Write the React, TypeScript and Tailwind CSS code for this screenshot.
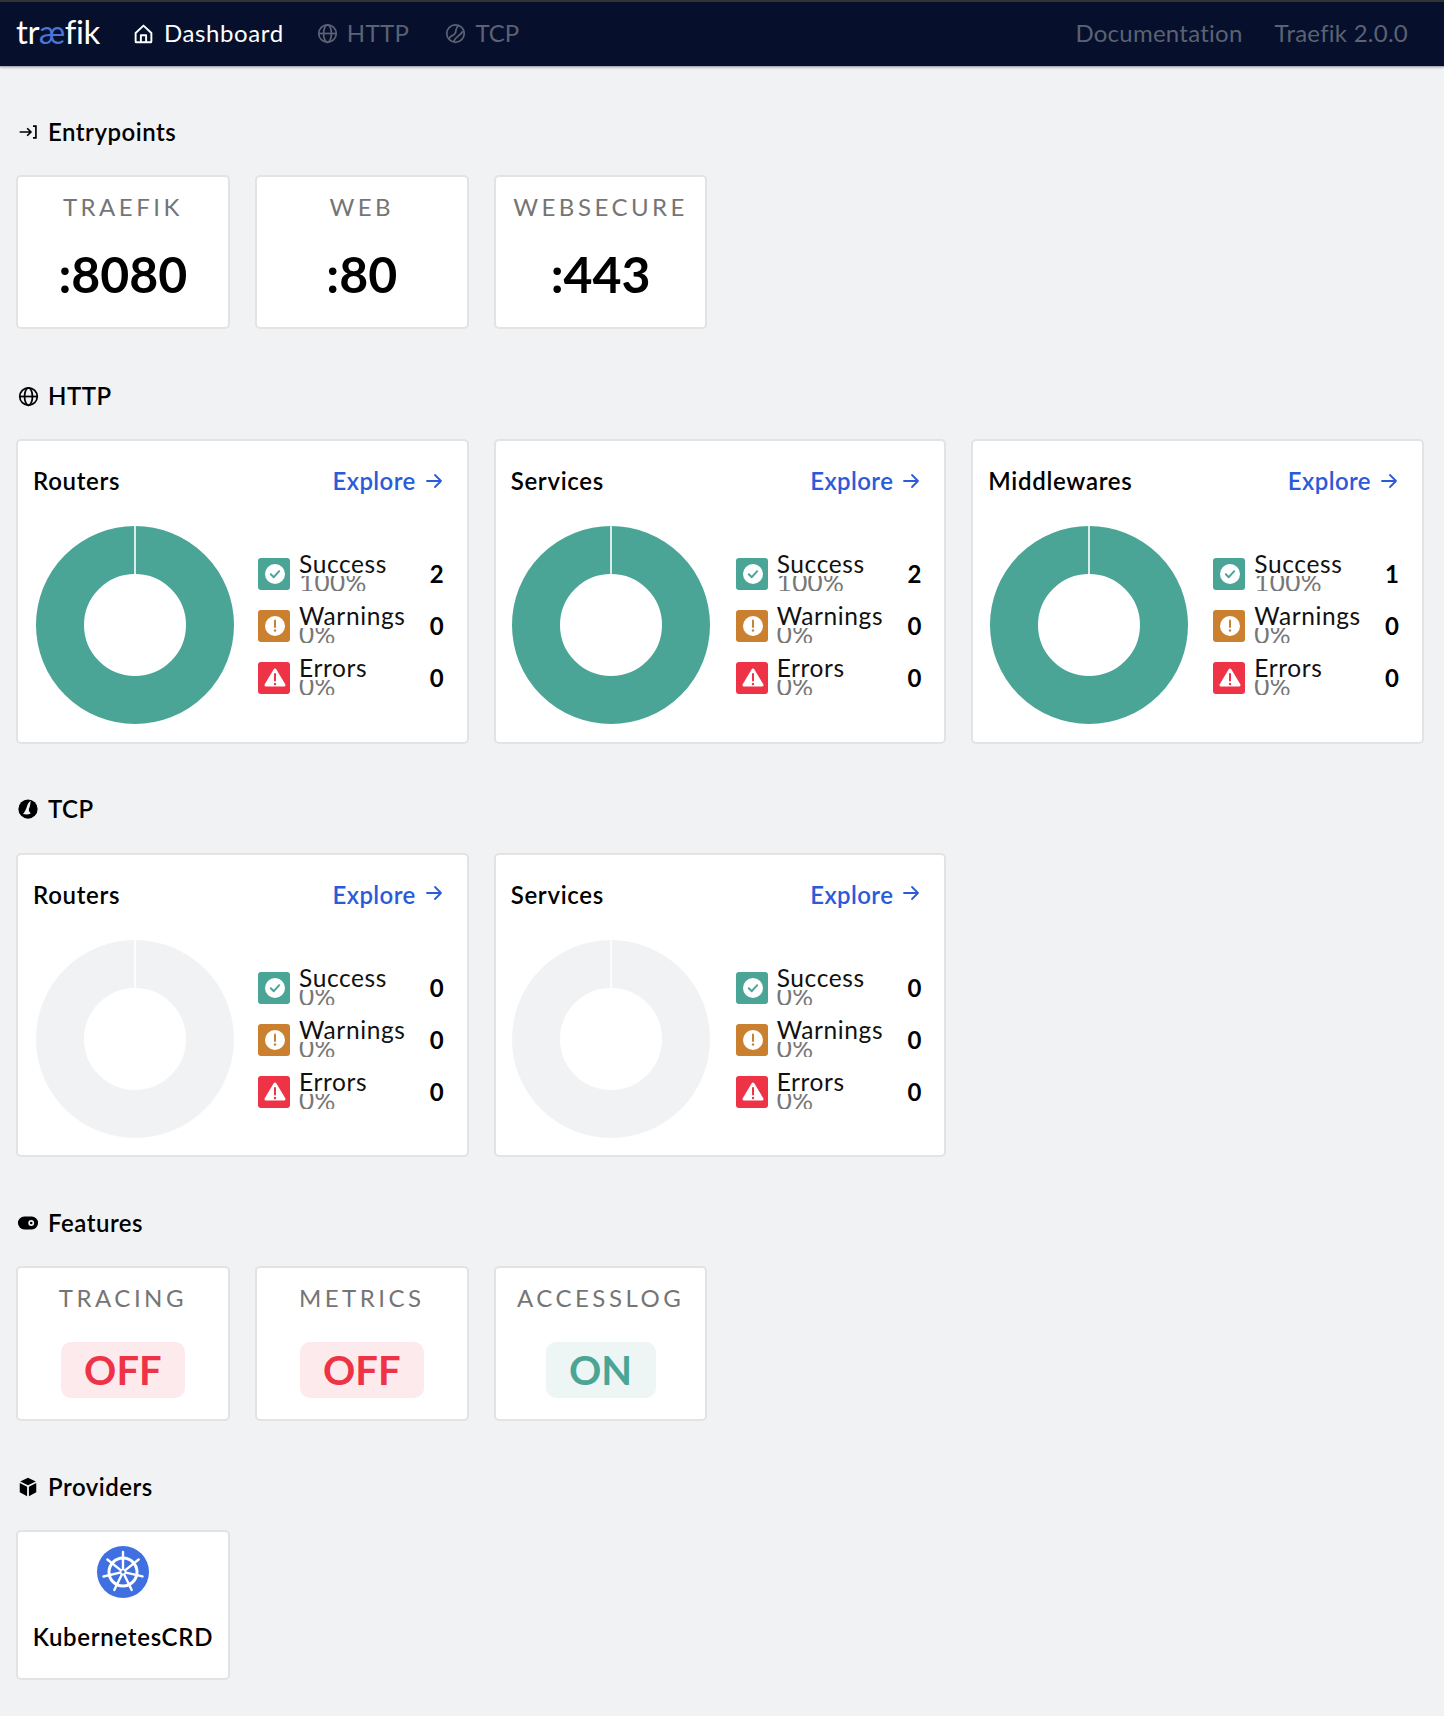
import React from "react";

const Globe = ({ className = "" }: { className?: string }) => (
  <svg viewBox="0 0 24 24" fill="none" stroke="currentColor" strokeWidth="2" className={className}>
    <circle cx="12" cy="12" r="10" />
    <ellipse cx="12" cy="12" rx="4.5" ry="10" />
    <path d="M2 12h20" />
  </svg>
);

const TcpOutline = ({ className = "" }: { className?: string }) => (
  <svg viewBox="0 0 24 24" fill="none" stroke="currentColor" strokeWidth="2" strokeLinecap="round" className={className}>
    <circle cx="12" cy="12" r="10" />
    <path d="M15.5 3C11 6 13.5 9 11.5 12S6 14 5 17.5" />
    <path d="M10 21c1-3 3-4.500 5-6s4-3 5-5" />
  </svg>
);

const TcpSolid = ({ className = "" }: { className?: string }) => (
  <svg viewBox="0 0 24 24" className={className}>
    <circle cx="12" cy="12" r="10.5" fill="currentColor" />
    <path d="M15 3C14.5 7 14 10 13 12C12.500 14 14 15.500 15 17C12 18.500 9 18 6.500 17.500C8.500 15 9.500 13 10.500 10C11.500 7 12.500 4.500 15 3Z" fill="#f1f2f4" />
  </svg>
);

const Home = ({ className = "" }: { className?: string }) => (
  <svg viewBox="0 0 24 24" fill="none" stroke="currentColor" strokeWidth="2.2" strokeLinejoin="round" className={className}>
    <path d="M3 11.5 12 3l9 8.5V21a1 1 0 0 1-1 1H4a1 1 0 0 1-1-1z" />
    <path d="M9 22v-8h6v8" />
  </svg>
);

const Enter = ({ className = "" }: { className?: string }) => (
  <svg viewBox="0 0 24 24" fill="none" stroke="currentColor" strokeWidth="2" className={className}>
    <path d="M2 12h13M11 7.5l4.5 4.5-4.5 4.5M18 5h3.500v14H18" />
  </svg>
);

const Toggle = ({ className = "" }: { className?: string }) => (
  <svg viewBox="0 0 24 24" className={className}>
    <rect x="1" y="5" width="22" height="14" rx="7" fill="currentColor" />
    <circle cx="15.500" cy="12" r="3.200" fill="#f1f2f4" />
    <circle cx="15.500" cy="12" r="1.400" fill="currentColor" />
  </svg>
);

const Cube = ({ className = "" }: { className?: string }) => (
  <svg viewBox="0 0 24 24" fill="currentColor" className={className}>
    <path d="M12 2 3.500 6 12 10l8.500-4z" />
    <path d="M3 7.600v10L11 22V11.600z" />
    <path d="M21 7.600v10L13 22V11.600z" />
  </svg>
);

const Arrow = ({ className = "" }: { className?: string }) => (
  <svg viewBox="0 0 18 18" fill="none" stroke="currentColor" strokeWidth="1.800" strokeLinecap="round" strokeLinejoin="round" className={className}>
    <path d="M2 9h14M10 3l6 6-6 6" />
  </svg>
);

const Wheel = () => (
  <svg viewBox="0 0 52 52" className="h-[52px] w-[52px]">
    <circle cx="26" cy="26" r="26" fill="#3f6fe0" />
    <g stroke="#fff" fill="none" strokeLinecap="round">
      <circle cx="26" cy="26" r="14" strokeWidth="3" />
      {[0, 51.4, 102.8, 154.3, 205.7, 257.1, 308.6].map((a) => (
        <g key={a} transform={`rotate(${a} 26 26)`}>
          <path d="M26 23V6" strokeWidth="2.400" />
        </g>
      ))}
      <circle cx="26" cy="26" r="2.500" strokeWidth="1.600" />
    </g>
  </svg>
);

const Donut = ({ color }: { color: string }) => (
  <svg viewBox="0 0 198 198" className="h-[198px] w-[198px] shrink-0">
    <circle cx="99" cy="99" r="75" fill="none" stroke={color} strokeWidth="48" />
    <path d="M99 0v48" stroke="#fff" strokeWidth="1.600" />
  </svg>
);

const Swatch = ({ kind }: { kind: "ok" | "warn" | "err" }) => {
  if (kind === "ok")
    return (
      <svg viewBox="0 0 32 32" className="h-8 w-8 shrink-0">
        <rect width="32" height="32" rx="3" fill="#4aa596" />
        <circle cx="17" cy="16" r="10" fill="#fff" />
        <path d="M12.800 16.200l3 3 5.400-6" fill="none" stroke="#4aa596" strokeWidth="2" strokeLinecap="round" strokeLinejoin="round" />
      </svg>
    );
  if (kind === "warn")
    return (
      <svg viewBox="0 0 32 32" className="h-8 w-8 shrink-0">
        <rect width="32" height="32" rx="3" fill="#cb8030" />
        <circle cx="17" cy="16" r="10" fill="#fff" />
        <path d="M17 10.500v6.500" stroke="#cb8030" strokeWidth="2" strokeLinecap="round" />
        <circle cx="17" cy="20.500" r="1.200" fill="#cb8030" />
      </svg>
    );
  return (
    <svg viewBox="0 0 32 32" className="h-8 w-8 shrink-0">
      <rect width="32" height="32" rx="3" fill="#ee3346" />
      <path d="M17 8 L26 23 H8 Z" fill="#fff" stroke="#fff" strokeWidth="3" strokeLinejoin="round" />
      <path d="M17 12v6.500" stroke="#ee3346" strokeWidth="2" strokeLinecap="round" />
      <circle cx="17" cy="22" r="1.200" fill="#ee3346" />
    </svg>
  );
};

const LegendRow = ({ kind, label, pct, n }: { kind: "ok" | "warn" | "err"; label: string; pct: string; n: number }) => (
  <div className="flex h-8 items-start">
    <Swatch kind={kind} />
    <div className="ml-[9px] flex-1">
      <div className="relative z-10 h-[18px] text-[24.5px] leading-[12px] tracking-[0.6px] text-[#111]">{label}</div>
      <div className="h-[15px] overflow-hidden text-[26px] leading-[13px] tracking-[0.4px] text-[#777]">{pct}</div>
    </div>
    <div className="self-center text-[24px] font-bold text-black">{n}</div>
  </div>
);

const StatCard = ({ title, ok, okPct, warn, err, empty, lift, pos = 0 }: { title: string; ok: number; okPct: string; warn: number; err: number; empty?: boolean; lift?: boolean; pos?: number }) => (
  <div className={`col-span-2 rounded-[5px] border-2 border-[#e3e3e3] bg-white pt-[26px] ${lift ? "pb-[17px]" : "pb-[18px]"}`}>
    <div className="flex h-[28px] items-center justify-between pl-[15px] pr-[24px]">
      <span className="text-[24px] font-semibold tracking-[0.7px] text-black">{title}</span>
      <span className="flex items-center text-[24px] font-semibold tracking-[0.4px] text-[#2c5bd9]">
        Explore
        <Arrow className={`ml-[9px] h-[18px] w-[18px] ${lift ? "-translate-y-[2px]" : ""}`} />
      </span>
    </div>
    <div className={`mt-[31px] flex items-center pr-[23px] ${pos === 1 ? "pl-[16px]" : pos === 2 ? "pl-[17px]" : "pl-[18px]"}`}>
      <Donut color={empty ? "#f1f2f4" : "#4aa596"} />
      <div className={`mt-[2px] flex flex-1 flex-col gap-5 ${pos === 1 ? "ml-[26px]" : pos === 2 ? "ml-[25px]" : "ml-[24px]"}`}>
        <LegendRow kind="ok" label="Success" pct={okPct} n={ok} />
        <LegendRow kind="warn" label="Warnings" pct="0%" n={warn} />
        <LegendRow kind="err" label="Errors" pct="0%" n={err} />
      </div>
    </div>
  </div>
);

const Heading = ({ icon, children, tall }: { icon: React.ReactNode; children: React.ReactNode; tall?: boolean }) => (
  <div className={`flex h-[28px] items-center text-black ${tall ? "mb-[30px]" : "mb-[29px]"}`}>
    <span className="ml-[1px] flex h-[22px] w-[22px] items-center justify-center">{icon}</span>
    <span className="ml-[9px] text-[24px] font-semibold tracking-[0.5px]">{children}</span>
  </div>
);

const SmallCard = ({ h, children }: { h: string; children: React.ReactNode }) => (
  <div className={`flex ${h} flex-col items-center rounded-[5px] border-2 border-[#e3e3e3] bg-white pt-[16px]`}>{children}</div>
);

const Label = ({ children }: { children: React.ReactNode }) => (
  <div className="h-[28px] text-[24px] leading-[28px] tracking-[3.5px] text-[#757575]">{children}</div>
);

const Entry = ({ name, port }: { name: string; port: string }) => (
  <SmallCard h="h-[154px]">
    <Label>{name}</Label>
    <div className="mt-[27px] h-[52px] text-[50px] font-bold leading-[52px] text-black">{port}</div>
  </SmallCard>
);

const Feature = ({ name, on }: { name: string; on?: boolean }) => (
  <SmallCard h="h-[155px]">
    <Label>{name}</Label>
    <div
      className={`mt-[30px] flex h-[56px] items-center justify-center rounded-[10px] text-[40px] font-bold ${
        on ? "w-[110px] bg-[#edf6f5] text-[#4aa596]" : "w-[124px] bg-[#fdeaec] text-[#ee3346]"
      }`}
    >
      {on ? "ON" : "OFF"}
    </div>
  </SmallCard>
);

export default function App() {
  return (
    <div className="min-h-[1716px] bg-[#f1f2f4] font-['Lato',sans-serif]">
      <header className="flex h-[67px] items-center justify-between border-t-2 border-b border-t-[#333333] border-b-[#a9abb0] bg-[#060f2b] pb-[2px] pl-4 pr-[36px] text-[24px] shadow-[0_1px_2px_rgba(0,0,0,0.2)]">
        <div className="flex items-center">
          <div className="mb-[4px] w-[117px] text-[33px] font-normal leading-none tracking-[-0.4px] text-white [font-variant-ligatures:none]">
            tr<span className="text-[#4a74d8]">æ</span>fik
          </div>
          <div className="flex items-center text-white">
            <Home className="h-[21px] w-[21px]" />
            <span className="ml-[10px] tracking-[0.6px]">Dashboard</span>
          </div>
          <div className="ml-[33px] flex items-center text-[#5b6273]">
            <Globe className="h-[21px] w-[21px]" />
            <span className="ml-[9px] tracking-[0.4px]">HTTP</span>
          </div>
          <div className="ml-[36px] flex items-center text-[#5b6273]">
            <TcpOutline className="h-[21px] w-[21px]" />
            <span className="ml-[9px]">TCP</span>
          </div>
        </div>
        <div className="flex items-center gap-[32px] tracking-[0.25px] text-[#5b6273]">
          <span>Documentation</span>
          <span>Traefik 2.0.0</span>
        </div>
      </header>
      <main className="pl-4 pr-5 pt-[51px]">
        <section>
          <Heading icon={<Enter className="h-[20px] w-[20px]" />}>Entrypoints</Heading>
          <div className="grid grid-cols-6 gap-x-[25px]">
            <Entry name="TRAEFIK" port=":8080" />
            <Entry name="WEB" port=":80" />
            <Entry name="WEBSECURE" port=":443" />
          </div>
        </section>
        <section className="mt-[53px]">
          <Heading icon={<Globe className="h-[21px] w-[21px]" />}>HTTP</Heading>
          <div className="grid grid-cols-6 gap-x-[25px]">
            <StatCard title="Routers" ok={2} okPct="100%" warn={0} err={0} />
            <StatCard title="Services" ok={2} okPct="100%" warn={0} err={0} pos={1} />
            <StatCard title="Middlewares" ok={1} okPct="100%" warn={0} err={0} pos={2} />
          </div>
        </section>
        <section className="mt-[51px]">
          <Heading tall icon={<TcpSolid className="h-[22px] w-[22px]" />}>TCP</Heading>
          <div className="grid grid-cols-6 gap-x-[25px]">
            <StatCard title="Routers" ok={0} okPct="0%" warn={0} err={0} empty lift />
            <StatCard title="Services" ok={0} okPct="0%" warn={0} err={0} empty lift pos={1} />
          </div>
        </section>
        <section className="mt-[52px]">
          <Heading icon={<Toggle className="h-[22px] w-[22px]" />}>Features</Heading>
          <div className="grid grid-cols-6 gap-x-[25px]">
            <Feature name="TRACING" />
            <Feature name="METRICS" />
            <Feature name="ACCESSLOG" on />
          </div>
        </section>
        <section className="mt-[52px]">
          <Heading icon={<Cube className="h-[22px] w-[22px]" />}>Providers</Heading>
          <div className="grid grid-cols-6 gap-x-[25px]">
            <div className="flex h-[150px] flex-col items-center rounded-[5px] border-2 border-[#e3e3e3] bg-white pt-[14px]">
              <Wheel />
              <div className="mt-[25px] text-[24px] font-semibold leading-[28px] tracking-[0.7px] text-black">KubernetesCRD</div>
            </div>
          </div>
        </section>
      </main>
    </div>
  );
}
